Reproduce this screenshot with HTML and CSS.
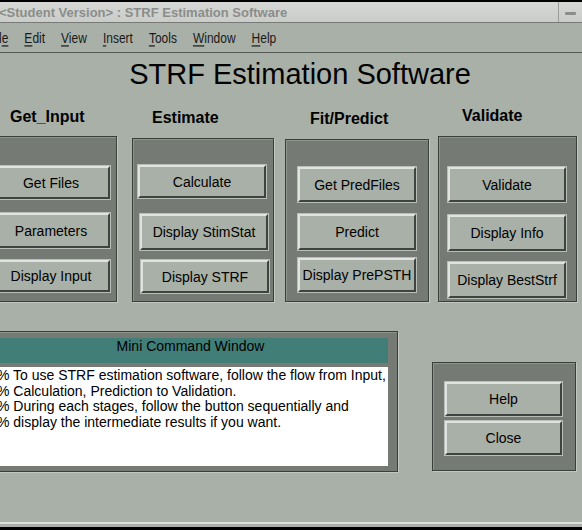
FILE: index.html
```html
<!DOCTYPE html>
<html>
<head>
<meta charset="utf-8">
<link rel="stylesheet" href="styles.css">
</head>
<body>
<div class="window">
  <div class="titlebar">
    <span class="title-text">&lt;Student Version&gt; : STRF Estimation Software</span>
    <span class="title-btn"><span class="dash"></span></span>
  </div>
  <div class="menubar">
    <span class="menu">Fil<u>e</u></span>
    <span class="menu"><u>E</u>dit</span>
    <span class="menu"><u>V</u>iew</span>
    <span class="menu"><u>I</u>nsert</span>
    <span class="menu"><u>T</u>ools</span>
    <span class="menu"><u>W</u>indow</span>
    <span class="menu"><u>H</u>elp</span>
  </div>
  <div class="content">
    <h1 class="app-title">STRF Estimation Software</h1>
    <div class="headings">
      <div class="heading h-input">Get_Input</div>
      <div class="heading h-estimate">Estimate</div>
      <div class="heading h-fit">Fit/Predict</div>
      <div class="heading h-validate">Validate</div>
    </div>
    <div class="panels">
      <div class="panel p1">
        <div class="btn">Get Files</div>
        <div class="btn">Parameters</div>
        <div class="btn">Display Input</div>
      </div>
      <div class="panel p2">
        <div class="btn">Calculate</div>
        <div class="btn">Display StimStat</div>
        <div class="btn">Display STRF</div>
      </div>
      <div class="panel p3">
        <div class="btn">Get PredFiles</div>
        <div class="btn">Predict</div>
        <div class="btn">Display PrePSTH</div>
      </div>
      <div class="panel p4">
        <div class="btn">Validate</div>
        <div class="btn">Display Info</div>
        <div class="btn">Display BestStrf</div>
      </div>
    </div>
    <div class="lower">
      <div class="panel mini">
        <div class="mini-header">Mini Command Window</div>
        <div class="mini-text">
          <div>% To use STRF estimation software, follow the flow from Input,</div>
          <div>% Calculation, Prediction to Validation.</div>
          <div>% During each stages, follow the button sequentially and</div>
          <div>% display the intermediate results if you want.</div>
        </div>
      </div>
      <div class="panel helpbox">
        <div class="btn">Help</div>
        <div class="btn">Close</div>
      </div>
    </div>
  </div>
  <div class="bottom-edge"></div>
</div>
</body>
</html>
```
FILE: styles.css
```css
html, body {
  margin: 0;
  padding: 0;
  background: #a9b0a7;
}
body {
  width: 582px;
  height: 530px;
  overflow: hidden;
  font-family: "Liberation Sans", Arial, sans-serif;
  color: #000;
}
.window {
  width: 582px;
  height: 530px;
  display: flex;
  flex-direction: column;
  overflow: hidden;
}
.titlebar {
  height: 20px;
  border-top: 2px solid #000;
  background: linear-gradient(#d6d8d5, #c9ccc8);
  border-bottom: 1px solid #777a77;
  display: flex;
  align-items: center;
  justify-content: space-between;
}
.title-text {
  margin-left: -1px;
  font-weight: bold;
  font-size: 13px;
  color: #8a8d8a;
  white-space: nowrap;
}
.title-btn {
  width: 23px;
  height: 20px;
  border-left: 1px solid #9a9d9a;
  display: flex;
  align-items: center;
  justify-content: center;
}
.dash {
  width: 11px;
  height: 3px;
  border-radius: 1px;
  background: #8a8d8a;
  margin-top: 2px;
}
.menubar {
  height: 29px;
  border-bottom: 1px solid #555955;
  background: #a9b0a7;
  display: flex;
  align-items: center;
  gap: 16px;
  margin-left: -11px;
}
.menu {
  display: inline-block;
  font-size: 12px;
  line-height: 14px;
  color: #1a1a1a;
  white-space: nowrap;
  transform: scaleY(1.22);
}
.menu u {
  text-decoration-thickness: 1px;
  text-underline-offset: 2px;
}
.content {
  flex: 1;
  margin-left: -20px;
  width: 602px;
}
.app-title {
  margin: 4px 0 0 0;
  padding-left: 38px;
  height: 34px;
  line-height: 34px;
  font-size: 29px;
  font-weight: normal;
  text-align: center;
  color: #000;
}
.headings {
  margin-top: 17px;
  height: 28px;
  display: grid;
  grid-template-columns: 172px 158px 152px auto;
}
.heading {
  font-size: 16px;
  font-weight: bold;
  line-height: 18px;
  white-space: nowrap;
}
.h-input { padding-left: 30px; }
.h-estimate { padding-top: 1px; }
.h-fit { padding-top: 2px; }
.h-validate { margin-top: -1px; }
.panels {
  display: flex;
  align-items: flex-start;
}
.panel {
  box-sizing: border-box;
  background: #757a75;
  border: 1px solid #3b3f3b;
  box-shadow: 1px 1px 0 #c3c7c2, inset 1px 1px 0 #8d928c;
  display: flex;
  flex-direction: column;
}
.btn {
  box-sizing: border-box;
  width: 118px;
  background: #a9b0a7;
  border: 2px solid;
  border-color: #e0e3df #3f433f #3f433f #e0e3df;
  box-shadow: 0 0 0 1px #b9beb8;
  display: flex;
  align-items: center;
  justify-content: center;
  font-size: 14px;
  white-space: nowrap;
  color: #000;
}
.p1 { margin-left: 5px; width: 132px; height: 166px; padding-left: 6px; }
.p2 { margin-left: 15px; width: 142px; height: 164px; margin-top: 2px; padding-left: 5px; }
.p3 { margin-left: 11px; width: 144px; height: 163px; margin-top: 3px; padding-left: 12px; }
.p4 { margin-left: 9px; width: 139px; height: 166px; padding-left: 9px; }

.p1 .btn:nth-child(1) { margin-top: 29px; height: 33px; }
.p1 .btn:nth-child(2) { margin-top: 14px; height: 35px; }
.p1 .btn:nth-child(3) { margin-top: 12px; height: 32px; }

.p2 .btn { width: 128px; }
.p2 .btn:nth-child(1) { margin-top: 26px; height: 33px; }
.p2 .btn:nth-child(2) { margin-top: 16px; height: 36px; margin-left: 2px; }
.p2 .btn:nth-child(3) { margin-top: 10px; height: 33px; margin-left: 3px; }

.p3 .btn:nth-child(1) { margin-top: 27px; height: 35px; }
.p3 .btn:nth-child(2) { margin-top: 12px; height: 36px; }
.p3 .btn:nth-child(3) { margin-top: 8px; height: 34px; }

.p4 .btn:nth-child(1) { margin-top: 30px; height: 35px; }
.p4 .btn:nth-child(2) { margin-top: 13px; height: 36px; }
.p4 .btn:nth-child(3) { margin-top: 11px; height: 36px; }

.lower {
  display: flex;
  align-items: flex-start;
  margin-top: 29px;
}
.mini {
  margin-left: 2px;
  width: 416px;
  height: 141px;
  padding: 6px 9px 0 10px;
}
.mini-header {
  height: 25px;
  background: #427e78;
  color: #000;
  font-size: 14px;
  text-align: center;
  line-height: 16px;
}
.mini-text {
  margin-top: 4px;
  height: 99px;
  background: #fff;
  padding: 1px 0 0 4px;
  box-sizing: border-box;
  font-size: 14px;
  line-height: 15.5px;
  white-space: nowrap;
  overflow: hidden;
}
.helpbox {
  margin-left: 34px;
  margin-top: 31px;
  width: 144px;
  height: 109px;
  padding: 19px 0 0 12px;
}
.helpbox .btn { width: 117px; height: 34px; }
.helpbox .btn + .btn { margin-top: 5px; }
.bottom-edge {
  height: 3px;
  border-top: 2px solid #dcdedb;
  border-bottom: 3px solid #000;
  background: #a9b0a7;
}
```
